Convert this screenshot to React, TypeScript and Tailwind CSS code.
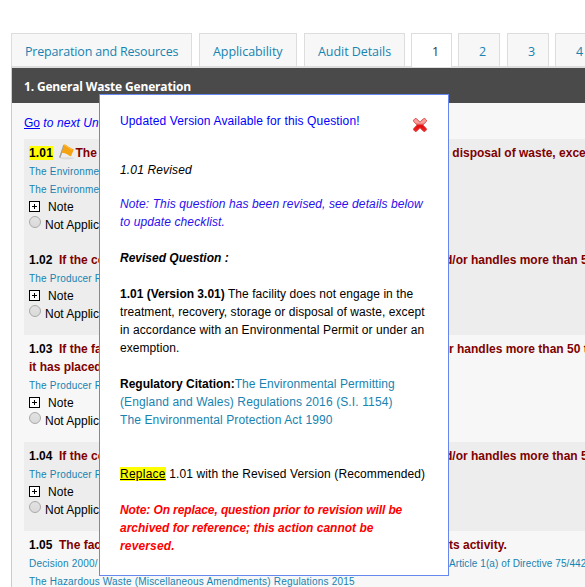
import type { ReactNode } from "react";

const Tab = ({ children, className }: { children: ReactNode; className: string }) => (
  <div
    className={`h-[33px] shrink-0 border border-b-0 border-[#dddddd] pt-[9px] pl-[13px] font-['Open_Sans','Noto_Sans',sans-serif] text-[12.5px] leading-[18px] whitespace-nowrap ${className}`}
  >
    {children}
  </div>
);

const Flag = () => (
  <svg width="17" height="17" viewBox="0 0 17 17" className="ml-[5px] mr-px -mt-px shrink-0">
    <ellipse cx="9" cy="15.2" rx="7" ry="1" fill="#dadada" />
    <path d="M6 2 1.700 14.800" stroke="#9b9b9b" strokeWidth="1.4" />
    <path d="M6 1.500C8 1 9 3 11 4L15.800 6.500 13 13.200C10 12.500 8.500 9.800 3.800 9.700Z" fill="#f6a313" />
    <path d="M6.500 2.400C8.500 2.300 10 5 14 6.500" stroke="#ffc34d" fill="none" />
  </svg>
);

const Line = ({ left, right, className = "" }: { left: ReactNode; right?: ReactNode; className?: string }) => (
  <div className={`flex h-[18px] whitespace-nowrap ${className}`}>
    <div className="w-[71px] shrink-0 overflow-hidden">{left}</div>
    {right && <div className="ml-[349px] shrink-0">{right}</div>}
  </div>
);

const Controls = () => (
  <>
    <div className="flex h-[18px] items-center">
      <div className="relative -top-px h-[11px] w-[11px] border border-black bg-white">
        <span className="absolute top-1 left-[2px] h-px w-[5px] bg-black" />
        <span className="absolute top-[2px] left-1 h-[5px] w-px bg-black" />
      </div>
      <span className="ml-2 tracking-[0.1px]">Note</span>
    </div>
    <div className="flex h-[18px] w-[71px] overflow-hidden whitespace-nowrap">
      <span className="h-3 w-3 shrink-0 rounded-full border border-[#a9a9a9] bg-linear-to-b from-[#e2e2e2] to-[#dadada]" />
      <span className="ml-1">Not Applic</span>
    </div>
  </>
);

const Question = ({ children, shaded = false }: { children: ReactNode; shaded?: boolean }) => (
  <div className={`pt-[5px] pb-3 pl-[5px] ${shaded ? "bg-[#ededed]" : ""}`}>{children}</div>
);

const title = "font-bold text-[#800000]";
const cite = "text-[10px] leading-[20px] tracking-[0.19px] text-[#1683b1]";
const num = "text-black";

export default function App() {
  return (
    <div className="relative h-[587px] w-[585px] overflow-hidden bg-white font-['Liberation_Sans',Arial,sans-serif] text-[12px] leading-[18px] text-black">
      <div className="flex pt-[33px] pl-[11px]">
        <Tab className="mr-[7px] w-[181px] bg-[#f7f7f7] tracking-[-0.18px] text-[#1683b1]">Preparation and Resources</Tab>
        <Tab className="mr-[7px] w-[98px] bg-[#f7f7f7] tracking-[-0.06px] text-[#1683b1]">Applicability</Tab>
        <Tab className="mr-[6px] w-[101px] bg-[#f7f7f7] tracking-[-0.06px] text-[#1683b1]">Audit Details</Tab>
        <Tab className="relative z-10 mr-[6px] -mb-px h-[34px] w-[41px] bg-white pl-[20px] font-medium text-[#333333]">1</Tab>
        <Tab className="mr-[7px] w-[42px] bg-[#f7f7f7] pl-[20px] text-[#1683b1]">2</Tab>
        <Tab className="mr-[6px] w-[42px] bg-[#f7f7f7] pl-[20px] text-[#1683b1]">3</Tab>
        <Tab className="w-[42px] bg-[#f7f7f7] pl-[20px] text-[#1683b1]">4</Tab>
      </div>
      <main className="ml-[11px] h-[521px] border-t-2 border-l border-t-[#dddddd] border-l-[#cccccc] bg-[#f7f7f7]">
        <h1 className="h-[35px] bg-[#4a4a4a] pt-[10px] pl-3 font-['Open_Sans','Noto_Sans',sans-serif] text-[12px] leading-[18px] font-bold tracking-[-0.17px] text-white">
          1. General Waste Generation
        </h1>
        <div className="pt-[11px] pl-3">
          <div className="mb-[7px] h-[18px] w-[76px] overflow-hidden whitespace-nowrap text-[#0000ff]">
            <span className="underline">Go</span> <em className="tracking-[0.08px]">to next Un</em>
          </div>
          <Question shaded>
            <Line
              className={title}
              left={
                <div className="flex">
                  <span className="my-[2px] h-[14px] w-6 shrink-0 bg-[#ffff00] leading-[14px] tracking-[0.15px] text-black">1.01</span>
                  <Flag />
                  <span className="-ml-[0.5px]">The</span>
                </div>
              }
              right={"\u00a0disposal of waste, exce"}
            />
            <Line className={cite} left="The Environme" />
            <Line className={cite} left="The Environme" />
            <Controls />
          </Question>
          <Question shaded>
            <Line className={title} left={<><span className={num}>1.02</span>&nbsp; If the co</>} right={<span className="-ml-1">d/or handles more than 5</span>} />
            <Line className={cite} left="The Producer R" />
            <Controls />
          </Question>
          <Question>
            <Line className={title} left={<><span className={num}>1.03</span>&nbsp; If the fa</>} right="r handles more than 50 t" />
            <Line className={title} left="it has placed" />
            <Line className={cite} left="The Producer R" />
            <Controls />
          </Question>
          <Question shaded>
            <Line className={title} left={<><span className={num}>1.04</span>&nbsp; If the co</>} right={<span className="-ml-1">d/or handles more than 5</span>} />
            <Line className={cite} left="The Producer R" />
            <Controls />
          </Question>
          <Question>
            <Line className={title} left={<><span className={num}>1.05</span>&nbsp; The fac</>} right="ts activity." />
            <Line className={cite} left="Decision 2000/" right={<span className="tracking-[0.09px]">Article 1(a) of Directive 75/442</span>} />
            <div className={`${cite} whitespace-nowrap`}>The Hazardous Waste (Miscellaneous Amendments) Regulations 2015</div>
          </Question>
        </div>
      </main>

      <section className="absolute top-[94px] left-[99px] z-20 h-[482px] w-[350px] border border-[#6688ee] bg-white pt-[17px] pl-5 whitespace-nowrap">
        <div className="flex h-[49px]">
          <span className="w-[292px] tracking-[0.13px] text-[#0000ff]">Updated Version Available for this Question!</span>
          <svg width="16" height="16" viewBox="0 0 16 16" className="mt-[5px]">
            <defs>
              <linearGradient id="cross" x1="0" y1="0" x2="0" y2="1">
                <stop offset="0.35" stopColor="#f5a09b" />
                <stop offset="0.55" stopColor="#e10b0b" />
                <stop offset="1" stopColor="#ef2929" />
              </linearGradient>
            </defs>
            <path
              d="M1.500 3.200 3.200 1.500 4.600 1.800 8 5.200 11.400 1.800 12.800 1.500 14.500 3.200 14.200 4.600 10.800 8 14.200 11.400 14.500 12.800 12.800 14.500 11.400 14.200 8 10.800 4.600 14.200 3.200 14.500 1.500 12.800 1.800 11.400 5.200 8 1.800 4.600Z"
              fill="url(#cross)"
              stroke="#d93c3c"
              strokeWidth="0.9"
              strokeLinejoin="round"
            />
          </svg>
        </div>
        <p className="h-[34px] tracking-[0.15px] italic">1.01 Revised</p>
        <p className="h-[54px] tracking-[0.11px] text-[#2a10ed] italic">
          Note: This question has been revised, see details below
          <br />
          to update checklist.
        </p>
        <p className="h-9 font-bold italic">Revised Question :</p>
        <p className="h-[90px] tracking-[0.07px]">
          <b className="tracking-normal">1.01 (Version 3.01)</b> The facility does not engage in the
          <br />
          treatment, recovery, storage or disposal of waste, except
          <br />
          <span className="tracking-[0.1px]">in accordance with an Environmental Permit or under an</span>
          <br />
          exemption.
        </p>
        <p className="h-[90px] tracking-[0.12px] text-[#1683b1]">
          <b className="tracking-normal text-black">Regulatory Citation:</b>
          <span className="tracking-[0.07px]">The Environmental Permitting</span>
          <br />
          (England and Wales) Regulations 2016 (S.I. 1154)
          <br />
          The Environmental Protection Act 1990
        </p>
        <p className="h-9 tracking-[0.12px]">
          <span className="bg-[#ffff00] tracking-[0.25px] underline">Replace</span> 1.01 with the Revised Version (Recommended)
        </p>
        <p className="font-bold text-[#ff0000] italic">
          <span className="tracking-[-0.1px]">Note: On replace, question prior to revision will be</span>
          <br />
          archived for reference; this action cannot be
          <br />
          <span className="tracking-[0.15px]">reversed.</span>
        </p>
      </section>
    </div>
  );
}
